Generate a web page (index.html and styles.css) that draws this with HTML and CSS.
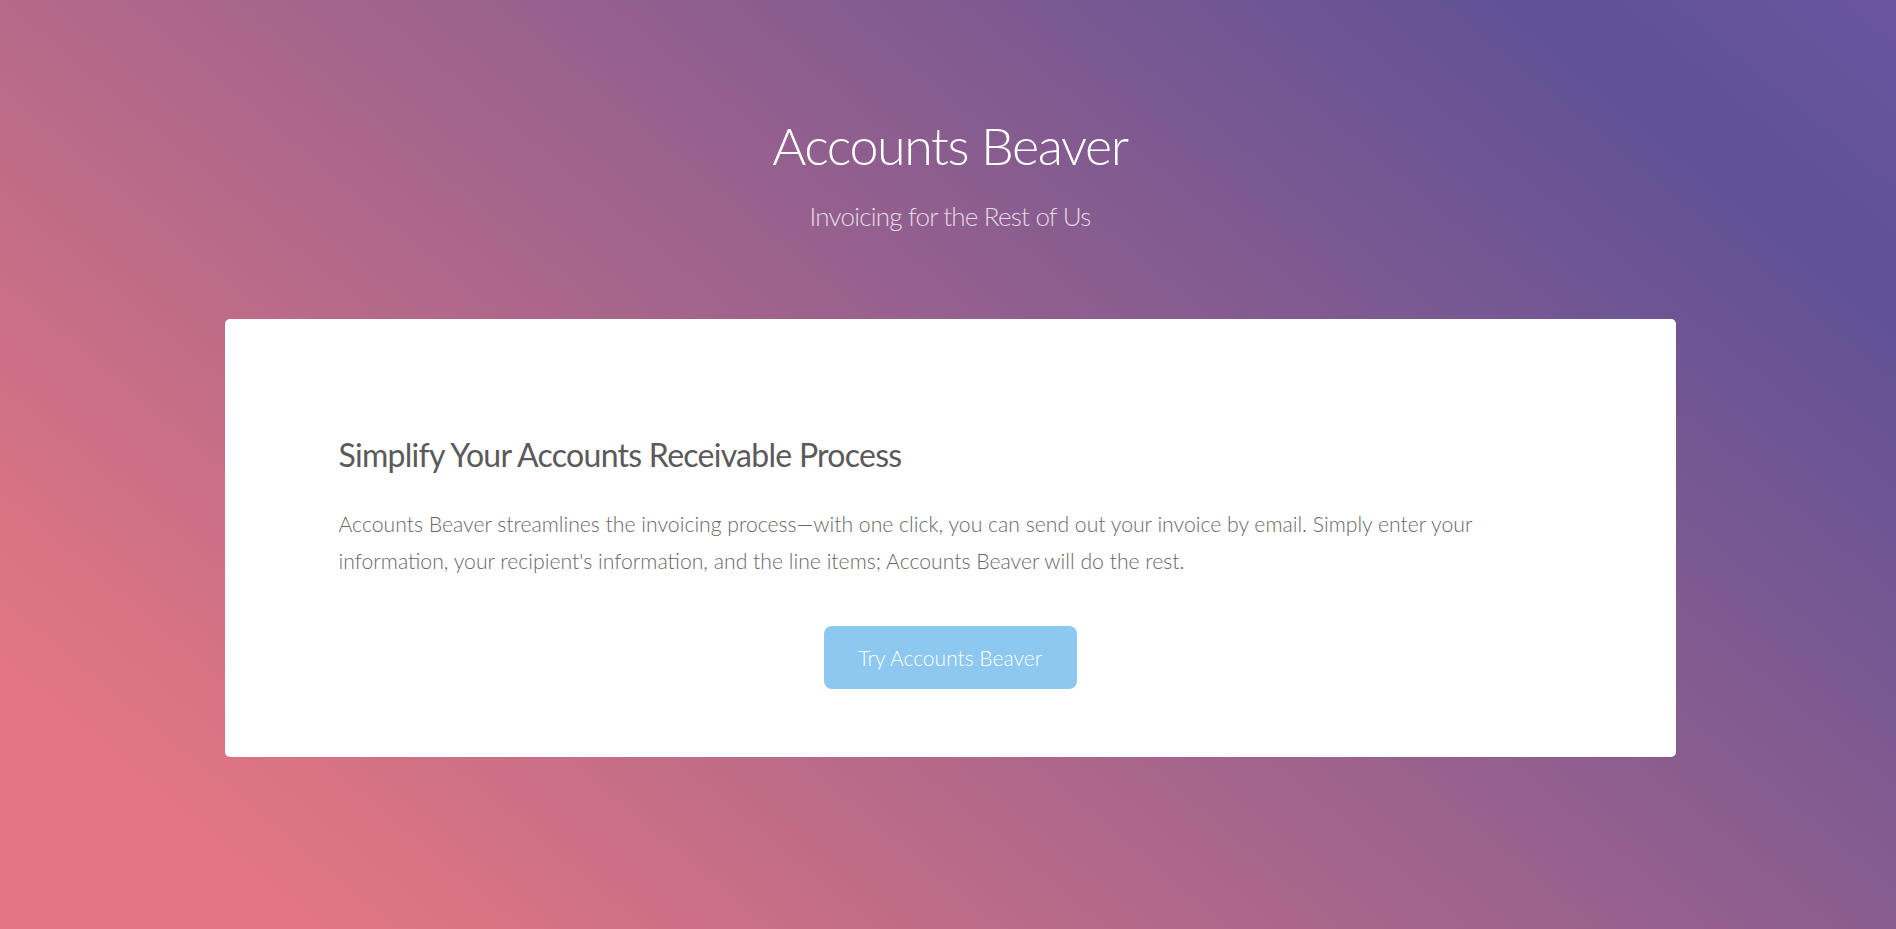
FILE: index.html
```html
<!DOCTYPE html>
<html lang="en">
<head>
<meta charset="utf-8">
<title>Accounts Beaver</title>
<link rel="stylesheet" href="styles.css">
</head>
<body>
<main class="page">
  <header class="hero">
    <h1 class="hero-title">Accounts Beaver</h1>
    <p class="hero-subtitle">Invoicing for the Rest of Us</p>
  </header>
  <section class="card">
    <h2 class="card-title">Simplify Your Accounts Receivable Process</h2>
    <p class="card-text">Accounts Beaver streamlines the invoicing process—with one click, you can send out your invoice by email. Simply enter your information, your recipient's information, and the line items; Accounts Beaver will do the rest.</p>
    <div class="card-actions">
      <a class="btn" href="#">Try Accounts Beaver</a>
    </div>
  </section>
</main>
</body>
</html>
```
FILE: styles.css
```css
html, body {
  margin: 0;
  padding: 0;
  height: 100%;
}

body {
  font-family: "Lato", "Open Sans", sans-serif;
  background: linear-gradient(40deg, #e37682 10%, #5f5196 88%, #6a55a0 100%);
  min-height: 929px;
  overflow: hidden;
}

.page {
  display: flex;
  flex-direction: column;
  align-items: center;
  padding: 119px 0 0 4px;
}

.hero {
  display: flex;
  flex-direction: column;
  align-items: center;
}

.hero-title {
  margin: 0;
  font-size: 52px;
  line-height: 1;
  font-weight: 300;
  letter-spacing: -1.4px;
  color: #ffffff;
}

.hero-subtitle {
  margin: 32px 0 0;
  font-size: 26px;
  line-height: 1;
  font-weight: 300;
  letter-spacing: -0.8px;
  color: rgba(255, 255, 255, 0.78);
}

.card {
  box-sizing: border-box;
  width: 1451px;
  margin-top: 90px;
  padding: 120px 114px 68px;
  background: #ffffff;
  border-radius: 5px;
}

.card-title {
  margin: 0;
  font-size: 32px;
  line-height: 1;
  font-weight: 400;
  letter-spacing: -0.73px;
  color: #5a5a5a;
}

.card-text {
  margin: 35px 0 0;
  font-size: 21.2px;
  line-height: 37px;
  font-weight: 300;
  color: #686868;
}

.card-actions {
  display: flex;
  justify-content: center;
  margin-top: 46px;
}

.btn {
  display: flex;
  align-items: center;
  justify-content: center;
  width: 253px;
  height: 63px;
  border-radius: 8px;
  background: #8cc8f0;
  color: #ffffff;
  font-size: 21px;
  font-weight: 300;
  text-decoration: none;
}
```
